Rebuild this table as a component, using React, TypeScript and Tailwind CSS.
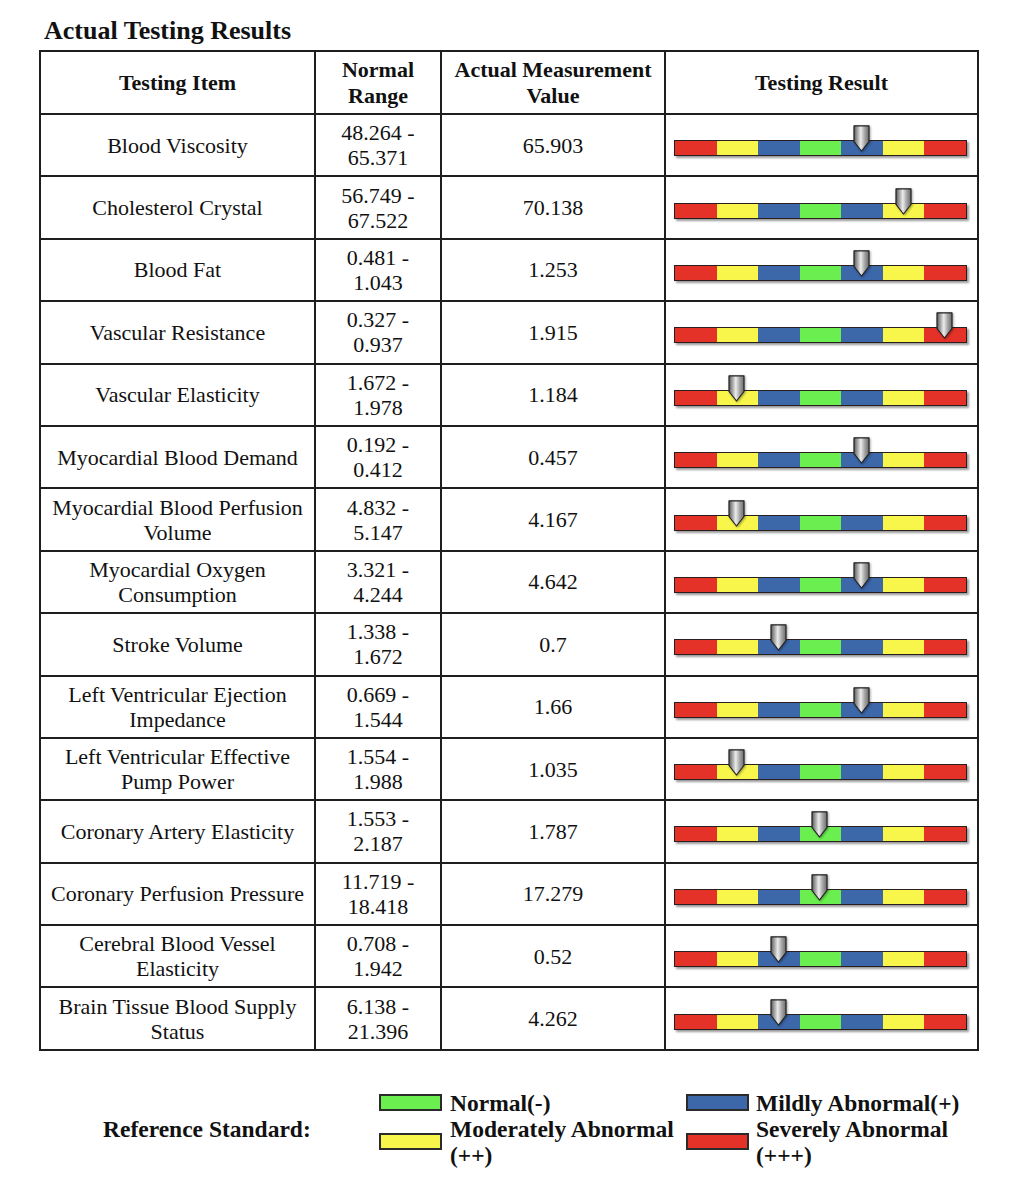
import React from "react";

type Row = { item: string; low: string; high: string; value: string; pos: number };

const rows: Row[] = [
  { item: "Blood Viscosity", low: "48.264", high: "65.371", value: "65.903", pos: 4 },
  { item: "Cholesterol Crystal", low: "56.749", high: "67.522", value: "70.138", pos: 5 },
  { item: "Blood Fat", low: "0.481", high: "1.043", value: "1.253", pos: 4 },
  { item: "Vascular Resistance", low: "0.327", high: "0.937", value: "1.915", pos: 6 },
  { item: "Vascular Elasticity", low: "1.672", high: "1.978", value: "1.184", pos: 1 },
  { item: "Myocardial Blood Demand", low: "0.192", high: "0.412", value: "0.457", pos: 4 },
  { item: "Myocardial Blood Perfusion Volume", low: "4.832", high: "5.147", value: "4.167", pos: 1 },
  { item: "Myocardial Oxygen Consumption", low: "3.321", high: "4.244", value: "4.642", pos: 4 },
  { item: "Stroke Volume", low: "1.338", high: "1.672", value: "0.7", pos: 2 },
  { item: "Left Ventricular Ejection Impedance", low: "0.669", high: "1.544", value: "1.66", pos: 4 },
  { item: "Left Ventricular Effective Pump Power", low: "1.554", high: "1.988", value: "1.035", pos: 1 },
  { item: "Coronary Artery Elasticity", low: "1.553", high: "2.187", value: "1.787", pos: 3 },
  { item: "Coronary Perfusion Pressure", low: "11.719", high: "18.418", value: "17.279", pos: 3 },
  { item: "Cerebral Blood Vessel Elasticity", low: "0.708", high: "1.942", value: "0.52", pos: 2 },
  { item: "Brain Tissue Blood Supply Status", low: "6.138", high: "21.396", value: "4.262", pos: 2 },
];

const segments = [
  "bg-[#e53228]",
  "bg-[#f8f54b]",
  "bg-[#3c67a9]",
  "bg-[#6bef50]",
  "bg-[#3c67a9]",
  "bg-[#f8f54b]",
  "bg-[#e53228]",
];

function Marker() {
  return (
    <svg width="17" height="27" viewBox="0 0 17 27" className="drop-shadow-[1px_1px_1px_rgba(0,0,0,0.35)]">
      <defs>
        <linearGradient id="steel" x1="0" x2="1" y1="0" y2="0">
          <stop offset="0" stopColor="#5a5a5a" />
          <stop offset="0.45" stopColor="#ececec" />
          <stop offset="0.7" stopColor="#a8a8a8" />
          <stop offset="1" stopColor="#6a6a6a" />
        </linearGradient>
      </defs>
      <path d="M1 0.8 H16 V16.5 L8.5 26 L1 16.5 Z" fill="url(#steel)" stroke="#222" strokeWidth="1.2" strokeLinejoin="round" />
    </svg>
  );
}

function ResultBar({ pos }: { pos: number }) {
  return (
    <div className="relative w-[293px] pt-[15px] mb-[9px]">
      <div className="flex h-[16px] border border-[#2a1f1f] shadow-[2px_2px_2px_rgba(0,0,0,0.4)]">
        {segments.map((c, i) => (
          <div key={i} className={`flex-1 ${c}`} />
        ))}
      </div>
      <div className="absolute top-0" style={{ left: pos * 41.6 + 12.5 }}>
        <Marker />
      </div>
    </div>
  );
}

function Swatch({ color }: { color: string }) {
  return <div className={`w-[63px] h-[17px] shrink-0 border-2 border-[#2b2b2b] ${color}`} />;
}

const cell = "border-r-2 border-b-2 border-[#1e1e1e] flex items-center justify-center text-center";

export default function App() {
  return (
    <div className="bg-white min-h-[1196px] w-[1012px] text-[#111] [font-family:'Liberation_Serif','Times_New_Roman',serif]">
      <h1 className="pt-[16px] pl-[44px] text-[26px] leading-[29px] font-bold">Actual Testing Results</h1>

      <div className="mt-[5px] ml-[39px] w-[940px] grid grid-cols-[275px_126px_224px_313px] grid-rows-[63px_repeat(15,62.4px)] border-l-2 border-t-2 border-[#1e1e1e] text-[22px] leading-[25px]">
        <div className={`${cell} font-bold leading-[26px]`}>Testing Item</div>
        <div className={`${cell} font-bold leading-[26px]`}>
          Normal
          <br />
          Range
        </div>
        <div className={`${cell} font-bold leading-[26px] flex-col`}>
          <span>Actual Measurement</span>
          <span>Value</span>
        </div>
        <div className={`${cell} font-bold leading-[26px]`}>Testing Result</div>

        {rows.map((r) => (
          <React.Fragment key={r.item}>
            <div className={`${cell} px-[6px]`}>{r.item}</div>
            <div className={`${cell} flex-col`}>
              <span>{r.low} -</span>
              <span>{r.high}</span>
            </div>
            <div className={cell}>{r.value}</div>
            <div className={`${cell} justify-start pl-[8px]`}>
              <ResultBar pos={r.pos} />
            </div>
          </React.Fragment>
        ))}
      </div>

      <div className="mt-[39px] ml-[103px] flex items-center font-bold text-[23.5px] leading-[26px]">
        <div className="w-[276px] pt-[1px]">Reference Standard:</div>
        <div className="grid grid-cols-[307px_auto] items-center">
          <div className="flex items-center gap-[8px]">
            <Swatch color="bg-[#6bef50]" />
            <span>Normal(-)</span>
          </div>
          <div className="flex items-center gap-[7px]">
            <Swatch color="bg-[#3c67a9]" />
            <span>Mildly Abnormal(+)</span>
          </div>
          <div className="flex items-center gap-[8px]">
            <Swatch color="bg-[#f8f54b]" />
            <span>
              Moderately Abnormal
              <br />
              (++)
            </span>
          </div>
          <div className="flex items-center gap-[7px]">
            <Swatch color="bg-[#e53228]" />
            <span>
              Severely Abnormal
              <br />
              (+++)
            </span>
          </div>
        </div>
      </div>
    </div>
  );
}
